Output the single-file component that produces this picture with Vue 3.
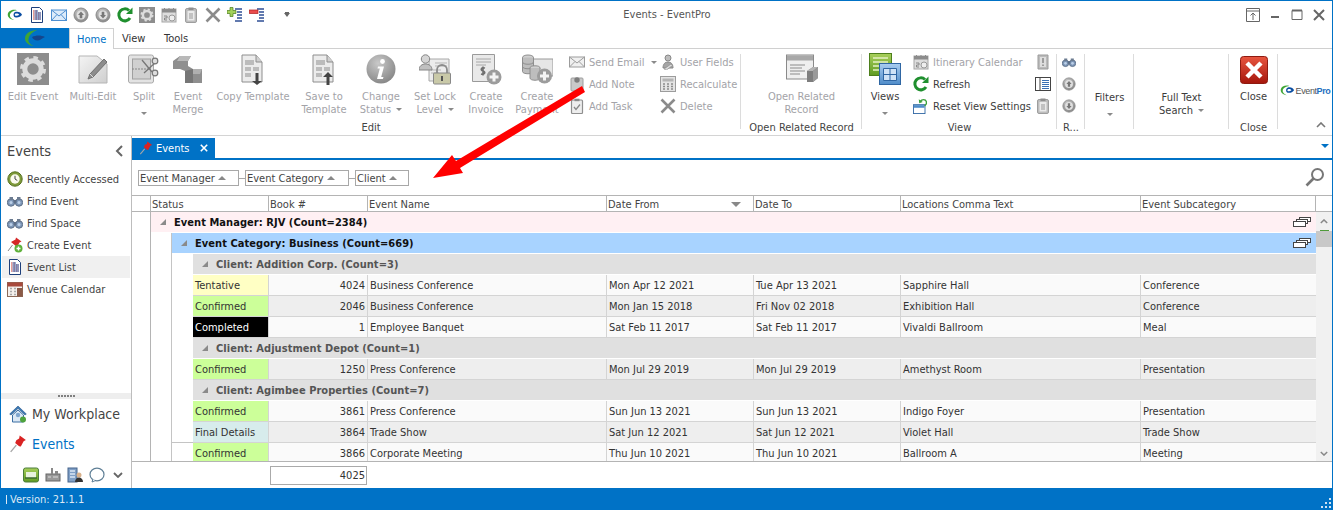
<script setup>
const qat = ['logo', 'doc', 'mail', 'up', 'down', 'refresh', 'gearsq', 'cal', 'clip', 'xgray', 'addcol', 'delcol']

const editBig = [
  { w: 64, icon: 'gear', lines: ['Edit Event'] },
  { w: 56, icon: 'multi', lines: ['Multi-Edit'] },
  { w: 46, icon: 'split', lines: ['Split'], below: true },
  { w: 42, icon: 'merge', lines: ['Event', 'Merge'] },
  { w: 88, icon: 'tdown', lines: ['Copy Template'] },
  { w: 54, icon: 'tup', lines: ['Save to', 'Template'] },
  { w: 60, icon: 'info', lines: ['Change', 'Status'], inline: true },
  { w: 48, icon: 'lock', lines: ['Set Lock', 'Level'], inline: true },
  { w: 54, icon: 'invoice', lines: ['Create', 'Invoice'] },
  { w: 48, icon: 'pay', lines: ['Create', 'Payment'] }
]
const smallA = [
  { icon: 'mail-g', t: 'Send Email', arrow: true },
  { icon: 'note', t: 'Add Note' },
  { icon: 'task', t: 'Add Task' }
]
const smallB = [
  { icon: 'user', t: 'User Fields' },
  { icon: 'calc', t: 'Recalculate' },
  { icon: 'xgray', t: 'Delete' }
]
const viewSmall = [
  { icon: 'cal', t: 'Itinerary Calendar', off: true },
  { icon: 'refresh', t: 'Refresh' },
  { icon: 'reset', t: 'Reset View Settings' }
]
const nav = [
  { icon: 'clock', t: 'Recently Accessed' },
  { icon: 'bino', t: 'Find Event' },
  { icon: 'bino', t: 'Find Space' },
  { icon: 'pinadd', t: 'Create Event' },
  { icon: 'doc', t: 'Event List', on: true },
  { icon: 'venue', t: 'Venue Calendar' }
]
const groupChips = [
  { t: 'Event Manager', w: 101 },
  { t: 'Event Category', w: 104 },
  { t: 'Client', w: 54 }
]
const cols = [
  { t: 'Book #', c: 'book' },
  { t: 'Event Name', c: 'name' },
  { t: 'Date From', c: 'from', sort: true },
  { t: 'Date To', c: 'to' },
  { t: 'Locations Comma Text', c: 'loc' },
  { t: 'Event Subcategory', c: 'sub' }
]
const d = (status, cls, num, name, from, to, loc, sub, alt, sep) => ({ type: 'd', status, cls, num, name, from, to, loc, sub, alt, sep })
const rows = [
  { type: 'm', t: 'Event Manager: RJV (Count=2384)' },
  { type: 'c', t: 'Event Category: Business (Count=669)' },
  { type: 'l', t: 'Client: Addition Corp. (Count=3)' },
  d('Tentative', 'st-t', 4024, 'Business Conference', 'Mon Apr 12 2021', 'Tue Apr 13 2021', 'Sapphire Hall', 'Conference', false),
  d('Confirmed', 'st-c', 2046, 'Business Conference', 'Mon Jan 15 2018', 'Fri Nov 02 2018', 'Exhibition Hall', 'Conference', true),
  d('Completed', 'st-k', 1, 'Employee Banquet', 'Sat Feb 11 2017', 'Sat Feb 11 2017', 'Vivaldi Ballroom', 'Meal', false),
  { type: 'l', t: 'Client: Adjustment Depot (Count=1)' },
  d('Confirmed', 'st-c', 1250, 'Press Conference', 'Mon Jul 29 2019', 'Mon Jul 29 2019', 'Amethyst Room', 'Presentation', true),
  { type: 'l', t: 'Client: Agimbee Properties (Count=7)' },
  d('Confirmed', 'st-c', 3861, 'Press Conference', 'Sun Jun 13 2021', 'Sun Jun 13 2021', 'Indigo Foyer', 'Presentation', false),
  d('Final Details', 'st-f', 3864, 'Trade Show', 'Sat Jun 12 2021', 'Sat Jun 12 2021', 'Violet Hall', 'Trade Show', true, true),
  d('Confirmed', 'st-c', 3866, 'Corporate Meeting', 'Thu Jun 10 2021', 'Thu Jun 10 2021', 'Ballroom A', 'Meeting', false)
]
</script>

<template>
  <div class="app">
    <svg class="defs" aria-hidden="true">
      <defs>
        <linearGradient id="gy" x1="0" y1="0" x2="0" y2="1"><stop offset="0" stop-color="#c4c4c4"/><stop offset="1" stop-color="#8a8a8a"/></linearGradient>
        <linearGradient id="pg" x1="0" y1="0" x2="1" y2="1"><stop offset="0" stop-color="#f4f4f4"/><stop offset="1" stop-color="#cfcfcf"/></linearGradient>
        <linearGradient id="rd" x1="0" y1="0" x2="0" y2="1"><stop offset="0" stop-color="#e8553f"/><stop offset="1" stop-color="#a5160c"/></linearGradient>
        <linearGradient id="gn" x1="0" y1="0" x2="0" y2="1"><stop offset="0" stop-color="#a8cf5a"/><stop offset="1" stop-color="#5f9a22"/></linearGradient>
        <linearGradient id="bl" x1="0" y1="0" x2="0" y2="1"><stop offset="0" stop-color="#a9cdf0"/><stop offset="1" stop-color="#4f8cc9"/></linearGradient>
        <radialGradient id="ig" cx=".4" cy=".3" r=".8"><stop offset="0" stop-color="#c9c9c9"/><stop offset="1" stop-color="#808080"/></radialGradient>
      </defs>

      <symbol id="logo" viewBox="0 0 16 16">
        <path d="M10 3.2C6 1.8 1.4 3.6.8 7c-.5 3 2.4 5.6 6.4 6-3-1-4.700-3-4.300-5.200C3.300 5.400 6.300 3.600 10 3.200z" fill="#3fa535"/>
        <path d="M8 5c3-1 6 .3 7 2.800-1.500 2.300-4.500 3.200-7 2.500C6 9.600 6 6 8 5z" fill="#0b4ea2"/>
        <path d="M8.500 6.600c1.400-.5 3 0 3.700 1.200-1 1-2.600 1.300-3.700.9-.9-.4-.9-1.700 0-2.100z" fill="#fff"/>
      </symbol>
      <symbol id="filelogo" viewBox="0 0 20 16">
        <path d="M12 0C5 0 0 4 0 8.500c0 4 4 7 9 7.500-4-1.500-6-4-5.500-7C4 5 8 1.500 12 0z" fill="#3fa535"/>
        <path d="M7 7c4-2 9-2 13 0-3 1-4 3-7 3.500-2.500.4-5-1-6-3.500z" fill="#14468c"/>
      </symbol>
      <symbol id="doc" viewBox="0 0 16 16">
        <path d="M2.500.5h8l3 3v12h-11z" fill="#fff" stroke="#1d3f7a"/>
        <path d="M4 4h5M4 6h8M4 8h8M4 10h8M4 12h8" stroke="#d03a2f" stroke-dasharray="1.500 1"/>
        <path d="M5.500 6h6.500M5.500 8h6.500M5.500 10h6.500M5.500 12h6.500M5.500 4h3.500" stroke="#2a5ba8"/>
      </symbol>
      <symbol id="mail" viewBox="0 0 16 16">
        <rect x=".5" y="3" width="15" height="10.500" fill="#dcebfa" stroke="#4f8fd0"/>
        <path d="M.5 3 8 9l7.500-6M.5 13.500 6 7.500M15.500 13.500 10 7.500" fill="none" stroke="#4f8fd0"/>
      </symbol>
      <symbol id="mail-g" viewBox="0 0 16 16">
        <rect x=".5" y="3" width="15" height="10" fill="#f0f0f0" stroke="#9c9c9c"/>
        <path d="M.5 3 8 9l7.500-6M.5 13 6 7.500M15.500 13 10 7.500" fill="none" stroke="#9c9c9c"/>
      </symbol>
      <symbol id="up" viewBox="0 0 16 16">
        <circle cx="8" cy="8" r="7" fill="url(#ig)" stroke="#8a8a8a"/>
        <circle cx="8" cy="8" r="4.500" fill="#e0e0e0"/>
        <path d="M8 4.500 11 8H9.300v3.200H6.700V8H5z" fill="#777"/>
      </symbol>
      <symbol id="down" viewBox="0 0 16 16">
        <circle cx="8" cy="8" r="7" fill="url(#ig)" stroke="#8a8a8a"/>
        <circle cx="8" cy="8" r="4.500" fill="#e0e0e0"/>
        <path d="M8 11.500 11 8H9.300V4.800H6.700V8H5z" fill="#777"/>
      </symbol>
      <symbol id="refresh" viewBox="0 0 16 16">
        <path d="M13 11a6 6 0 1 1 -1-7.500" fill="none" stroke="#1f8f2e" stroke-width="3"/>
        <path d="M15.500 .5v6.500H9z" fill="#1f8f2e"/>
      </symbol>
      <symbol id="gearsq" viewBox="0 0 32 32">
        <rect width="32" height="32" fill="#8d8d8d"/>
        <circle cx="16" cy="16" r="11.200" fill="none" stroke="#dcdcdc" stroke-width="3.600" stroke-dasharray="4.400 4.400"/>
        <circle cx="16" cy="16" r="8.200" fill="none" stroke="#dcdcdc" stroke-width="5"/>
      </symbol>
      <symbol id="gear" viewBox="0 0 32 32"><use href="#gearsq"/></symbol>
      <symbol id="cal" viewBox="0 0 16 16">
        <rect x="1" y="2" width="14" height="13" fill="#ddd" stroke="#a5a5a5"/>
        <rect x="1" y="2" width="14" height="3.500" fill="#8c8c8c"/>
        <path d="M3.500 1v3M8 1v3M12.500 1v3" stroke="#8c8c8c"/>
        <circle cx="11" cy="11" r="3" fill="#eee" stroke="#999"/>
        <path d="M3 9h3v2H3.500v2H6" fill="none" stroke="#888"/>
      </symbol>
      <symbol id="clip" viewBox="0 0 16 16">
        <rect x="2.500" y="1.500" width="11" height="14" rx="1.500" fill="#bdbdbd" stroke="#9e9e9e"/>
        <rect x="4.500" y="4" width="7" height="9.500" fill="#eaeaea"/>
        <rect x="5.500" y=".5" width="5" height="2.500" fill="#8f8f8f"/>
        <path d="M6 7h4M6 9h4M6 11h4" stroke="#999"/>
      </symbol>
      <symbol id="xgray" viewBox="0 0 16 16">
        <path d="M1.500 1.500l13 13M14.500 1.500l-13 13" stroke="#8b8b8b" stroke-width="2.600"/>
      </symbol>
      <symbol id="addcol" viewBox="0 0 16 16">
        <path d="M8 2h7M10 5h5M10 8h5M10 11h5M8 14h7" stroke="#2f4f95" stroke-width="1.400"/>
        <path d="M3 .5h3v3h3v3H6v3H3v-3H0v-3h3z" fill="#a4d25a" stroke="#4a7d1e" stroke-width=".7"/>
      </symbol>
      <symbol id="delcol" viewBox="0 0 16 16">
        <path d="M8 2h7M10 5h5M10 8h5M10 11h5M8 14h7" stroke="#2f4f95" stroke-width="1.400"/>
        <rect x=".5" y="3" width="8.500" height="3.500" fill="#ea4c4c" stroke="#b01f1f" stroke-width=".7"/>
      </symbol>

      <symbol id="multi" viewBox="0 0 32 32">
        <path d="M2 3h18l10 8v19H2z" fill="url(#pg)" stroke="#b5b5b5"/>
        <path d="M27 6l3 3-14 15-5 2 2-5z" fill="#8d8d8d" stroke="#6f6f6f"/>
        <path d="M13 21l3 3" stroke="#ddd"/>
      </symbol>
      <symbol id="split" viewBox="0 0 32 32">
        <rect x=".5" y="2" width="25" height="28" rx="2" fill="#e3e3e3" stroke="#a9a9a9"/>
        <rect x="4.500" y="6" width="18" height="20" fill="#d0d0d0" stroke="#a0a0a0"/>
        <path d="M4 16h18" stroke="#888" stroke-dasharray="2 1"/>
        <path d="M14 7l10 12M28 9 16 20" stroke="#777" stroke-width="1.300"/>
        <circle cx="27" cy="8" r="2.800" fill="#ddd" stroke="#777" stroke-width="1.200"/>
        <circle cx="27" cy="20" r="2.800" fill="#ddd" stroke="#777" stroke-width="1.200"/>
      </symbol>
      <symbol id="merge" viewBox="0 0 32 32">
        <path d="M8 3h11l-3 5v5l5 3h9v14H13V18l-5-2H1V8z" fill="#8f8f8f"/>
        <path d="M8 3h11l-3 5H5z" fill="#b9b9b9"/>
        <path d="M21 16h9l-2 5h-7z" fill="#b0b0b0"/>
        <path d="M13 18l8-2v14h-8z" fill="#767676"/>
      </symbol>
      <symbol id="tdown" viewBox="0 0 32 32">
        <path d="M5 2h14l6 7v20H5z" fill="#ececec" stroke="#8e8e8e"/>
        <path d="M8 7h9v5H8zM8 14h6v4H8zM16 14h6v4h-6zM8 20h6v4H8z" fill="#bcbcbc"/>
        <path d="M19 2v7h6" fill="#d0d0d0" stroke="#8e8e8e"/>
        <path d="M18.500 20h3v8H25l-5 4-5-4h3.500z" fill="#444"/>
      </symbol>
      <symbol id="tup" viewBox="0 0 32 32">
        <path d="M5 2h14l6 7v20H5z" fill="#ececec" stroke="#8e8e8e"/>
        <path d="M8 7h9v5H8zM8 14h6v4H8zM16 14h6v4h-6zM8 20h6v4H8z" fill="#bcbcbc"/>
        <path d="M19 2v7h6" fill="#d0d0d0" stroke="#8e8e8e"/>
        <path d="M18.500 32h3v-8H25l-5-5-5 5h3.500z" fill="#444"/>
      </symbol>
      <symbol id="info" viewBox="0 0 32 32">
        <circle cx="16" cy="16" r="14.500" fill="url(#ig)"/>
        <circle cx="17.500" cy="8.500" r="2.400" fill="#fff"/>
        <path d="M13 13.500h6l-2.800 10.500h2.300l-.6 2H12l2.800-10.500h-2.300z" fill="#fff"/>
      </symbol>
      <symbol id="lock" viewBox="0 0 32 32">
        <path d="M10 6h20v22H10z" fill="#ececec" stroke="#a8a8a8"/>
        <path d="M16 10h12M16 13h12M12 17h10M12 20h8" stroke="#b5b5b5"/>
        <circle cx="6.500" cy="6" r="4.200" fill="#d5d5d5" stroke="#868686"/>
        <path d="M0 17c0-4 3-6 6.500-6s6.500 2 6.500 6z" fill="#c0c0c0" stroke="#868686"/>
        <path d="M18 21v-4a5 5 0 0 1 10 0v4" fill="none" stroke="#8b8b8b" stroke-width="1.800"/>
        <rect x="14.500" y="20" width="17" height="11" rx="1" fill="#c9c9a8" stroke="#888"/>
        <rect x="22" y="23" width="2" height="5" fill="#555"/>
      </symbol>
      <symbol id="invoice" viewBox="0 0 32 32">
        <path d="M2.500 1.500h22v27h-22z" fill="#e9e9e9" stroke="#9a9a9a"/>
        <path d="M6 6h15M6 9h15M6 12h10" stroke="#a8a8a8"/>
        <circle cx="24" cy="24" r="7.500" fill="#9c9c9c"/>
        <path d="M22.500 19.500h3v3h3v3h-3v3h-3v-3h-3v-3h3z" fill="#f4f4f4"/>
        <path d="M15 15c-4-1-5 2-2 3s2 4-2 3M13 13.500v9" fill="none" stroke="#6f6f6f" stroke-width="1.600"/>
      </symbol>
      <symbol id="pay" viewBox="0 0 32 32">
        <rect x="11" y="6" width="21" height="17" fill="#e6e6e6" stroke="#9a9a9a"/>
        <ellipse cx="7" cy="4.500" rx="5.500" ry="2.500" fill="#d0d0d0" stroke="#8e8e8e"/>
        <path d="M1.500 4.500v14c0 3 11 3 11 0v-14" fill="#bdbdbd" stroke="#8e8e8e"/>
        <path d="M1.500 9c0 3 11 3 11 0M1.500 13.500c0 3 11 3 11 0" fill="none" stroke="#8e8e8e"/>
        <ellipse cx="14" cy="15" rx="5" ry="2.200" fill="#d0d0d0" stroke="#8e8e8e"/>
        <path d="M9 15v10c0 3 10 3 10 0V15" fill="#bdbdbd" stroke="#8e8e8e"/>
        <circle cx="23.500" cy="23" r="7.500" fill="#9c9c9c"/>
        <path d="M22 18.500h3v3h3v3h-3v3h-3v-3h-3v-3h3z" fill="#f4f4f4"/>
      </symbol>
      <symbol id="note" viewBox="0 0 16 16">
        <rect x="2" y="2" width="12" height="13" rx="1" fill="#c9c9c9" stroke="#9e9e9e"/>
        <circle cx="8" cy="4" r="2.700" fill="#7d7d7d"/>
      </symbol>
      <symbol id="task" viewBox="0 0 16 16">
        <rect x="2.500" y="2" width="11" height="13.500" rx="1" fill="#eee" stroke="#8f8f8f" stroke-width="1.200"/>
        <rect x="5.500" y=".7" width="5" height="2.500" fill="#8a8a8a"/>
        <path d="M5 9l2 2.500 4-5" fill="none" stroke="#888" stroke-width="1.300"/>
      </symbol>
      <symbol id="user" viewBox="0 0 16 16">
        <circle cx="8" cy="4" r="3" fill="#bdbdbd" stroke="#888"/>
        <path d="M3 14c0-4 2-6 5-6s5 2 5 6z" fill="#a5a5a5" stroke="#888"/>
        <path d="M4 15l7-5 1.500 1.500-6 4.500z" fill="#dadada" stroke="#888" stroke-width=".6"/>
      </symbol>
      <symbol id="calc" viewBox="0 0 16 16">
        <rect x=".5" y=".5" width="15" height="15" fill="#e4e4e4" stroke="#9c9c9c"/>
        <rect x="2.500" y="2.500" width="11" height="3" fill="#b4b4b4"/>
        <path d="M3 8h2M7 8h2M11 8h2M3 10.500h2M7 10.500h2M11 10.500h2M3 13h2M7 13h2M11 13h2" stroke="#8b8b8b" stroke-width="1.400"/>
      </symbol>
      <symbol id="openrel" viewBox="0 0 32 32">
        <rect x=".5" y="2" width="27" height="24" fill="#efefef" stroke="#8a8a8a"/>
        <rect x="1" y="2.500" width="26" height="5" fill="#a8a8a8"/>
        <path d="M4 12h15M4 15h12M4 18h15M4 21h10" stroke="#8b8b8b"/>
        <path d="M21 18l6-4h5v11l-5 4h-6z" fill="#7e7e7e"/>
        <path d="M21 18l6-4h5l-5 4z" fill="#b5b5b5"/>
        <path d="M27 18v11l5-4V14z" fill="#9a9a9a"/>
      </symbol>
      <symbol id="views" viewBox="0 0 32 32">
        <rect x=".5" y=".5" width="22" height="22" fill="url(#gn)" stroke="#4d7f1c"/>
        <path d="M4 5h15M4 9h15M4 13h15M4 17h8" stroke="#e6f1c4" stroke-width="1.500"/>
        <rect x="10.500" y="10.500" width="21" height="21" fill="url(#bl)" stroke="#2f66a3"/>
        <path d="M14.500 15.500h13v12h-13zM14.500 21.500h13M21 15.500v12" fill="#cfe3f7" stroke="#2f66a3"/>
      </symbol>
      <symbol id="reset" viewBox="0 0 18 18">
        <rect x=".5" y="7.500" width="13" height="10" fill="#fff" stroke="#2f66a3"/>
        <rect x="1" y="8" width="12" height="3" fill="#4f8cc9"/>
        <path d="M8 4c2-3 6-3 7 0s-1 4-2 5" fill="none" stroke="#3aa03a" stroke-width="1.500"/>
        <path d="M6.500 1.500l.5 4.500 4-1.500z" fill="#3aa03a"/>
      </symbol>
      <symbol id="exclam" viewBox="0 0 16 16">
        <path d="M3 1h10v14H3z" fill="#bbb" stroke="#9b9b9b"/>
        <rect x="5" y="3" width="6" height="10" fill="#dedede"/>
        <path d="M8 4v5M8 10.500v1.500" stroke="#888" stroke-width="1.500"/>
      </symbol>
      <symbol id="panel" viewBox="0 0 16 16">
        <rect x=".5" y="1.500" width="15" height="13" fill="#fff" stroke="#444"/>
        <path d="M5 1.500v13" stroke="#444"/>
        <path d="M7 4.500h7M7 6.500h7M7 8.500h7M7 10.500h7M7 12.500h7" stroke="#3a6fb3"/>
      </symbol>
      <symbol id="bino" viewBox="0 0 16 16">
        <circle cx="4" cy="9.500" r="3.700" fill="#7e97b8" stroke="#5d6f87"/>
        <circle cx="12" cy="9.500" r="3.700" fill="#7e97b8" stroke="#5d6f87"/>
        <rect x="2.500" y="4" width="3.500" height="3" fill="#6b7b90"/>
        <rect x="10" y="4" width="3.500" height="3" fill="#6b7b90"/>
        <rect x="6.500" y="7" width="3" height="3" fill="#5d6f87"/>
        <circle cx="4" cy="9.500" r="1.500" fill="#bcd0e8"/>
        <circle cx="12" cy="9.500" r="1.500" fill="#bcd0e8"/>
      </symbol>
      <symbol id="closebig" viewBox="0 0 28 28">
        <rect x=".5" y=".5" width="27" height="27" rx="3" fill="url(#rd)" stroke="#8e1a10"/>
        <path d="M7 7l14 14M21 7 7 21" stroke="#fff" stroke-width="4.500"/>
      </symbol>
      <symbol id="clock" viewBox="0 0 16 16">
        <circle cx="8" cy="8" r="7.200" fill="#7f9a3a" stroke="#55701f"/>
        <circle cx="8" cy="8" r="4.700" fill="#fbfbef"/>
        <path d="M8 4.800V8l2.300 1.500" fill="none" stroke="#444"/>
      </symbol>
      <symbol id="pinadd" viewBox="0 0 16 16">
        <path d="M9 .5l5.500 4-2 1-2.500 4.500-6-5 4.500-2.500z" fill="#d62828"/>
        <path d="M5.500 8 1 14" stroke="#888"/>
        <circle cx="11.500" cy="11.500" r="4" fill="#5fb13a"/>
        <path d="M9.500 11.500h4M11.500 9.500v4" stroke="#fff" stroke-width="1.400"/>
      </symbol>
      <symbol id="pin" viewBox="0 0 16 16">
        <path d="M9.500.5l5.500 4-2 1-2.500 4.800-1.500-.3L5.500 7l1-2.300L9 3z" fill="#d92323"/>
        <path d="M6.500 9 1.500 15" stroke="#a6a6a6" stroke-width="1.200"/>
      </symbol>
      <symbol id="venue" viewBox="0 0 16 16">
        <rect x=".5" y="1.500" width="15" height="14" fill="#f5f0ec" stroke="#8c6a58"/>
        <rect x=".5" y="1.500" width="15" height="4" fill="#a84a3d"/>
        <path d="M3 7.500h2M7 7.500h2M3 10.500h2M7 10.500h2M3 13.500h2M7 13.500h2" stroke="#aaa" stroke-width="1.500"/>
        <rect x="10" y="7" width="5.500" height="8.500" fill="#8b5a48"/>
      </symbol>
      <symbol id="home" viewBox="0 0 18 18">
        <path d="M9 1 .7 9l1.300 1 7-6.500L16 10l1.300-1z" fill="#3b78b5" stroke="#2a5988" stroke-width=".6"/>
        <path d="M3.500 10 9 5l5.500 5v7h-11z" fill="#dbe8f5" stroke="#3b6ea3"/>
        <circle cx="9" cy="10" r="2.200" fill="#7fa6cf"/>
        <circle cx="14" cy="14.500" r="3" fill="#4ea33d"/>
      </symbol>
      <symbol id="bar1" viewBox="0 0 16 16">
        <rect x=".5" y="1" width="15" height="14" rx="2" fill="url(#gn)" stroke="#4a7d3b"/>
        <rect x="3" y="5" width="10" height="6" fill="#e8f2dd"/>
        <path d="M2 11h12" stroke="#3b6a2c" stroke-width="1.500"/>
      </symbol>
      <symbol id="bar2" viewBox="0 0 16 16">
        <rect x="1" y="7" width="14" height="7" fill="#999" stroke="#666"/>
        <rect x="6" y="1" width="2" height="6" fill="#888"/>
        <rect x="10" y="4" width="3" height="3" fill="#888"/>
        <path d="M3 10h3M8 10h5" stroke="#ddd"/>
      </symbol>
      <symbol id="bar3" viewBox="0 0 16 16">
        <rect x="1" y="1" width="9" height="14" fill="#7f9fc6" stroke="#46648c"/>
        <path d="M3 4h5M3 7h5M3 10h5" stroke="#dce8f5" stroke-width="1.300"/>
        <circle cx="12" cy="8" r="2.500" fill="#d7b08b"/>
        <path d="M8 15c0-3 2-4.500 4-4.500s4 1.500 4 4.500z" fill="#333"/>
      </symbol>
      <symbol id="bar4" viewBox="0 0 16 16">
        <ellipse cx="8" cy="7.500" rx="7" ry="6.300" fill="#fff" stroke="#5f7f96" stroke-width="1.200"/>
        <path d="M4 12l-1 3 4-1.700" fill="#fff" stroke="#5f7f96"/>
      </symbol>
      <symbol id="stack" viewBox="0 0 18 10">
        <rect x="6.500" y=".5" width="11" height="4" fill="#fff" stroke="#444"/>
        <rect x="3.500" y="2.500" width="11" height="4" fill="#fff" stroke="#444"/>
        <rect x=".5" y="4.500" width="12" height="5" fill="#fff" stroke="#444"/>
      </symbol>
    </svg>

    <header class="qat-row">
      <div class="qat">
        <span v-for="(q, i) in qat" :key="i" class="qat-item">
          <svg class="i16"><use :href="'#' + q"/></svg>
        </span>
        <span class="qat-drop"></span>
      </div>
      <div class="title">Events - EventPro</div>
      <div class="winctl">
        <svg class="wc" viewBox="0 0 14 14"><path d="M.5 .5h13v13H.5zM.5 3h13M7 12V5M4.500 7.500 7 5l2.500 2.500" fill="none" stroke="#666"/></svg>
        <svg class="wc" viewBox="0 0 14 14"><path d="M3 9h8" stroke="#666" stroke-width="2"/></svg>
        <svg class="wc" viewBox="0 0 14 14"><path d="M2 2.500h10v9H2z" fill="none" stroke="#666"/><path d="M2 2.500h10" stroke="#666" stroke-width="2"/></svg>
        <svg class="wc" viewBox="0 0 14 14"><path d="M2 2l10 10M12 2 2 12" stroke="#666" stroke-width="2"/></svg>
      </div>
    </header>

    <nav class="tabs">
      <div class="file-tab">
        <svg class="file-logo"><use href="#filelogo"/></svg>
      </div>
      <div class="tab active">Home</div>
      <div class="tab view">View</div>
      <div class="tab tools">Tools</div>
    </nav>

    <section class="ribbon">
      <div class="group g-edit">
        <div class="g-body">
          <div v-for="b in editBig" :key="b.icon" class="big" :style="{ width: b.w + 'px' }">
            <svg class="i32"><use :href="'#' + b.icon"/></svg>
            <div v-for="(l, li) in b.lines" :key="li" class="big-t off">{{ l }}<span v-if="b.inline && li === 1" class="caret in"></span></div>
            <span v-if="b.below" class="caret below"></span>
          </div>
          <div class="col col-a">
            <div v-for="s in smallA" :key="s.t" class="small off"><svg class="i16"><use :href="'#' + s.icon"/></svg>{{ s.t }}<span v-if="s.arrow" class="caret in2"></span></div>
          </div>
          <div class="col col-b">
            <div v-for="s in smallB" :key="s.t" class="small off"><svg class="i16"><use :href="'#' + s.icon"/></svg>{{ s.t }}</div>
          </div>
        </div>
        <div class="g-label">Edit</div>
      </div>

      <div class="group g-open">
        <div class="g-body">
          <div class="big w-full">
            <svg class="i32"><use href="#openrel"/></svg>
            <div class="big-t off">Open Related</div>
            <div class="big-t off">Record</div>
          </div>
        </div>
        <div class="g-label">Open Related Record</div>
      </div>

      <div class="group g-view">
        <div class="g-body">
          <div class="big w-views">
            <svg class="i32"><use href="#views"/></svg>
            <div class="big-t">Views</div>
            <span class="caret below"></span>
          </div>
          <div class="col col-v">
            <div v-for="s in viewSmall" :key="s.t" class="small" :class="{ off: s.off }"><svg class="i16"><use :href="'#' + s.icon"/></svg>{{ s.t }}</div>
          </div>
          <div class="col col-ic">
            <div class="small"><svg class="i16"><use href="#exclam"/></svg></div>
            <div class="small"><svg class="i16"><use href="#panel"/></svg></div>
            <div class="small"><svg class="i16"><use href="#clip"/></svg></div>
          </div>
        </div>
        <div class="g-label">View</div>
      </div>

      <div class="group g-r">
        <div class="g-body">
          <div class="col col-r">
            <div class="small"><svg class="i14"><use href="#bino"/></svg></div>
            <div class="small"><svg class="i14"><use href="#up"/></svg></div>
            <div class="small"><svg class="i14"><use href="#down"/></svg></div>
          </div>
        </div>
        <div class="g-label">R...</div>
      </div>

      <div class="group g-filters">
        <div class="mid">
          <div class="big-t">Filters</div>
          <span class="caret"></span>
        </div>
      </div>

      <div class="group g-full">
        <div class="mid">
          <div class="big-t">Full Text</div>
          <div class="big-t">Search<span class="caret in"></span></div>
        </div>
      </div>

      <div class="group g-close">
        <div class="g-body">
          <div class="big w-full">
            <svg class="i28"><use href="#closebig"/></svg>
            <div class="big-t">Close</div>
          </div>
        </div>
        <div class="g-label">Close</div>
      </div>

      <div class="g-logo">
        <div class="ep">
          <svg class="ep-mark" viewBox="0 0 16 16"><use href="#logo"/></svg>
          <span class="ep-t">Event<b>Pro</b></span>
        </div>
        <svg class="collapse" viewBox="0 0 10 6"><path d="M1 5l4-4 4 4" fill="none" stroke="#777" stroke-width="1.600"/></svg>
      </div>
    </section>

    <div class="body">
      <aside class="side">
        <div class="side-head">
          <span>Events</span>
          <svg class="side-chev" viewBox="0 0 8 12"><path d="M7 1 2 6l5 5" fill="none" stroke="#666" stroke-width="2"/></svg>
        </div>
        <div v-for="n in nav" :key="n.t" class="nav" :class="{ on: n.on }">
          <svg class="i16"><use :href="'#' + n.icon"/></svg>{{ n.t }}
        </div>
        <div class="spacer"></div>
        <div class="split-bar"><i></i><i></i><i></i><i></i><i></i><i></i></div>
        <div class="pane"><svg class="i18"><use href="#home"/></svg>My Workplace</div>
        <div class="pane cur"><svg class="i18"><use href="#pin"/></svg>Events</div>
        <div class="side-foot">
          <svg class="i16"><use href="#bar1"/></svg>
          <svg class="i16"><use href="#bar2"/></svg>
          <svg class="i16"><use href="#bar3"/></svg>
          <svg class="i16"><use href="#bar4"/></svg>
          <svg class="foot-chev" viewBox="0 0 10 6"><path d="M1 1l4 4 4-4" fill="none" stroke="#666" stroke-width="1.800"/></svg>
        </div>
      </aside>

      <main class="main">
        <div class="doc-tabs">
          <div class="doc-tab">
            <svg class="i14"><use href="#pin"/></svg>
            <span>Events</span>
            <svg class="doc-x" viewBox="0 0 8 8"><path d="M.8 .8l6.400 6.400M7.200 .8 .8 7.200" stroke="#fff" stroke-width="1.600"/></svg>
          </div>
          <span class="doc-menu"></span>
        </div>

        <div class="group-panel">
          <template v-for="(g, i) in groupChips" :key="g.t">
            <span v-if="i" class="link"></span>
            <div class="chip" :style="{ width: g.w + 'px' }">{{ g.t }}<span class="tri-up"></span></div>
          </template>
          <svg class="search" viewBox="0 0 20 20"><circle cx="12.500" cy="7.500" r="5.500" fill="none" stroke="#777" stroke-width="2"/><path d="M8.500 11.500 1.500 18.500" stroke="#777" stroke-width="2.600"/></svg>
        </div>

        <div class="head">
          <div class="h-ind"></div>
          <div class="h-cell status-h">Status</div>
          <div v-for="c in cols" :key="c.c" class="h-cell" :class="c.c">
            {{ c.t }}<span v-if="c.sort" class="tri-down"></span>
          </div>
        </div>

        <div class="grid-wrap">
          <div class="rows">
            <template v-for="(r, i) in rows" :key="i">
              <div v-if="r.type !== 'd'" class="row g-row" :class="'t-' + r.type">
                <span class="ind i1"></span>
                <span v-if="r.type !== 'm'" class="ind i2"></span>
                <span v-if="r.type === 'l'" class="ind i3"></span>
                <div class="g-fill">
                  <span class="exp"></span>
                  <span class="g-text">{{ r.t }}</span>
                  <svg v-if="r.type !== 'l'" class="stack"><use href="#stack"/></svg>
                </div>
              </div>
              <div v-else class="row d-row" :class="{ alt: r.alt }">
                <span class="ind i1"></span>
                <span class="ind i2"></span>
                <span class="ind i3" :class="{ sep: r.sep }"></span>
                <div class="cell status" :class="r.cls">{{ r.status }}</div>
                <div class="cell book">{{ r.num }}</div>
                <div class="cell name">{{ r.name }}</div>
                <div class="cell from">{{ r.from }}</div>
                <div class="cell to">{{ r.to }}</div>
                <div class="cell loc">{{ r.loc }}</div>
                <div class="cell sub">{{ r.sub }}</div>
              </div>
            </template>
          </div>
          <div class="scroll">
            <svg class="sc-chev" viewBox="0 0 10 6"><path d="M1 5l4-4 4 4" fill="none" stroke="#888" stroke-width="1.800"/></svg>
            <div class="sc-mark"></div>
            <div class="sc-thumb"></div>
            <div class="spacer"></div>
            <svg class="sc-chev dn" viewBox="0 0 10 6"><path d="M1 1l4 4 4-4" fill="none" stroke="#888" stroke-width="1.800"/></svg>
          </div>
        </div>

        <div class="footer">
          <div class="sum">4025</div>
        </div>
      </main>
    </div>

    <footer class="status-bar">
      <span class="pipe"></span>
      <span>Version: 21.1.1</span>
      <svg class="grip" viewBox="0 0 12 12"><path d="M9 1h2v2H9zM5 5h2v2H5zM9 5h2v2H9zM1 9h2v2H1zM5 9h2v2H5zM9 9h2v2H9z" fill="#cfe3f4"/></svg>
    </footer>

    <svg class="red-arrow" viewBox="0 0 1333 510"><polygon points="433,178 452,155 456,161 582,86 585,92 460,168 463,173" fill="#ff0000"/></svg>
  </div>
</template>

<style>
html, body { margin: 0; padding: 0; background: #fff; }
</style>

<style scoped>
.app {
  position: relative;
  width: 1333px;
  height: 510px;
  box-sizing: border-box;
  border: 1px solid #0072c6;
  border-bottom: 0;
  display: flex;
  flex-direction: column;
  overflow: hidden;
  background: #fff;
  font-family: "DejaVu Sans Condensed", "DejaVu Sans", sans-serif;
  font-size: 11px;
  color: #3c3c3c;
}
.defs { position: absolute; width: 0; height: 0; overflow: hidden; }
.i14 { width: 14px; height: 14px; flex: none; }
.i16 { width: 16px; height: 16px; flex: none; }
.i18 { width: 18px; height: 18px; flex: none; }
.i28 { width: 28px; height: 28px; flex: none; }
.i32 { width: 32px; height: 32px; flex: none; }
.spacer { flex: 1; }

/* title row */
.qat-row { height: 27px; display: flex; align-items: center; position: relative; flex: none; }
.qat { display: flex; align-items: center; padding-left: 3px; }
.qat-item { width: 22px; display: flex; justify-content: center; }
.qat-drop {
  margin-left: 16px; width: 0; height: 0;
  border: 3px solid transparent; border-top: 4px solid #666; border-bottom: 0;
  box-shadow: 0 -2px 0 -1px #666;
}
.title { position: absolute; left: 1px; right: 0; top: 6px; text-align: center; line-height: 16px; color: #555; }
.winctl { margin-left: auto; display: flex; gap: 8px; padding-right: 6px; }
.wc { width: 14px; height: 14px; }

/* tabs */
.tabs { height: 20px; display: flex; flex: none; border-bottom: 1px solid #d0d0d0; position: relative; box-sizing: content-box; }
.file-tab { width: 68px; height: 20px; background: #0072c6; display: flex; justify-content: center; align-items: center; }
.file-logo { width: 20px; height: 16px; }
.tab { line-height: 22px; color: #333; }
.tab.active { color: #0072c6; background: #fff; border: 1px solid #d0d0d0; border-bottom: 0; padding: 0 7px; line-height: 21px; width: 29px; text-align: center; position: relative; z-index: 1; height: 20px; box-sizing: content-box; }
.tab.view { padding: 0 8px 0 8px; width: 23px; }
.tab.tools { padding-left: 11px; }

/* ribbon */
.ribbon { height: 87px; flex: none; display: flex; border-bottom: 1px solid #d4d4d4; box-sizing: border-box; }
.group { display: flex; flex-direction: column; position: relative; }
.group::after { content: ""; position: absolute; right: 0; top: 5px; bottom: 6px; width: 1px; background: #dcdcdc; }
.g-edit { width: 740px; }
.g-open { width: 121px; }
.g-view { width: 195px; }
.g-r { width: 28px; }
.g-filters { width: 49px; }
.g-full { width: 95px; }
.g-close { width: 49px; }
.g-body { display: flex; height: 72px; flex: none; }
.g-label { text-align: center; line-height: 14px; color: #444; }
.big { display: flex; flex-direction: column; align-items: center; flex: none; padding-top: 4px; box-sizing: border-box; }
.big .i32 { margin-bottom: 5px; }
.big .i28 { margin: 3px 0 6px; }
.w-full { width: 100%; }
.w-views { width: 46px; }
.big-t { line-height: 13px; white-space: nowrap; text-align: center; color: #3c3c3c; }
.off { color: #a3a3a8 !important; }
.col { display: flex; flex-direction: column; padding-top: 2px; flex: none; box-sizing: border-box; }
.col-a { width: 91px; padding-left: 8px; }
.col-b { width: 89px; padding-left: 8px; }
.col-v { width: 123px; padding-left: 5px; }
.col-ic { width: 26px; padding-left: 4px; }
.col-r { width: 27px; padding-left: 5px; }
.small { height: 22px; display: flex; align-items: center; gap: 4px; white-space: nowrap; color: #3c3c3c; }
.caret { display: inline-block; width: 0; height: 0; border: 3px solid transparent; border-top: 3px solid #8a8a8a; border-bottom: 0; }
.caret.in { margin-left: 5px; vertical-align: 2px; }
.caret.in2 { margin-left: 2px; }
.caret.below { margin-top: 9px; }
.mid { flex: 1; display: flex; flex-direction: column; align-items: center; padding-top: 42px; box-sizing: border-box; }
.mid .caret:not(.in) { margin-top: 9px; }
.g-logo { flex: 1; position: relative; display: flex; flex-direction: column; align-items: center; }
.ep { display: flex; align-items: center; margin-top: 34px; gap: 1px; }
.ep-mark { width: 15px; height: 15px; }
.ep-t { font-size: 9px; letter-spacing: -.4px; color: #555; font-family: "Liberation Sans", sans-serif; }
.ep-t b { color: #1e6fc0; }
.collapse { position: absolute; right: 6px; bottom: 7px; width: 10px; height: 6px; }

/* body */
.body { flex: 1; display: flex; min-height: 0; }
.side { width: 130px; flex: none; border-right: 1px solid #bdbdbd; display: flex; flex-direction: column; }
.side-head { height: 32px; display: flex; align-items: center; justify-content: space-between; padding: 0 8px 2px 6px; font-size: 14.500px; color: #444; flex: none; box-sizing: border-box; }
.side-chev { width: 8px; height: 12px; }
.nav { height: 22px; margin: 0 1px; padding-left: 5px; display: flex; align-items: center; gap: 4px; color: #444; flex: none; }
.nav.on { background: #f0f0f0; }
.split-bar { height: 6px; background: #eeeeee; display: flex; justify-content: center; align-items: center; gap: 1px; flex: none; }
.split-bar i { width: 2px; height: 2px; background: #7f7f7f; }
.pane { height: 30px; display: flex; align-items: center; gap: 5px; padding-left: 8px; font-size: 14px; color: #444; flex: none; }
.pane.cur { color: #0072c6; }
.side-foot { height: 29px; padding: 3px 0 0 22px; display: flex; align-items: center; gap: 6px; box-sizing: border-box; flex: none; }
.foot-chev { width: 10px; height: 6px; margin-left: 2px; }

.main { flex: 1; display: flex; flex-direction: column; min-width: 0; }
.doc-tabs { height: 24px; flex: none; display: flex; align-items: flex-end; border-bottom: 2px solid #0072c6; box-sizing: border-box; position: relative; }
.doc-tab { width: 83px; height: 20px; box-sizing: border-box; background: #0072c6; color: #fff; display: flex; align-items: center; padding-left: 7px; gap: 3px; }
.doc-x { width: 8px; height: 8px; margin-left: 7px; }
.doc-menu { position: absolute; right: 3px; top: 8px; width: 0; height: 0; border: 4px solid transparent; border-top: 4px solid #0072c6; border-bottom: 0; }

.group-panel { height: 35px; flex: none; display: flex; align-items: center; padding: 1px 7px 0 6px; box-sizing: border-box; }
.chip { height: 16px; box-sizing: border-box; border: 1px solid #a8a8a8; padding: 1px 0 0 1px; display: flex; align-items: center; color: #444; }
.link { width: 6px; height: 1px; background: #a8a8a8; }
.tri-up { margin: -1px 0 0 3px; width: 0; height: 0; border: 4px solid transparent; border-bottom: 4px solid #888; border-top: 0; }
.tri-down { position: absolute; right: 12px; top: 6px; width: 0; height: 0; border: 5px solid transparent; border-top: 5px solid #888; border-bottom: 0; }
.search { width: 20px; height: 20px; margin: -3px 0 0 auto; }

.head { height: 17px; flex: none; display: flex; border-top: 1px solid #b4b4b4; border-bottom: 1px solid #b4b4b4; box-sizing: border-box; }
.h-ind { width: 19px; border-right: 1px solid #b4b4b4; box-sizing: border-box; flex: none; }
.h-cell { position: relative; box-sizing: border-box; border-right: 1px solid #b4b4b4; padding-left: 1px; line-height: 17px; height: 15px; color: #444; flex: none; white-space: nowrap; }
.status-h { width: 118px; }
.book { width: 99px; }
.name { width: 239px; }
.from { width: 147px; }
.to { width: 147px; }
.loc { width: 240px; }
.sub { width: 175px; }

.grid-wrap { flex: 1; display: flex; min-height: 0; overflow: hidden; }
.rows { flex: 1; min-width: 0; overflow: hidden; }
.row { height: 21px; display: flex; box-sizing: border-box; }
.ind { flex: none; box-sizing: border-box; background: #fff; height: 21px; }
.i1 { width: 19px; border-right: 1px solid #b4b4b4; }
.i2 { width: 21px; border-right: 1px solid #c4c4c4; }
.i3 { width: 21px; }
.i3.sep { border-bottom: 1px solid #c4c4c4; }
.g-fill { flex: 1; display: flex; align-items: center; height: 20px; font-weight: 700; position: relative; margin-bottom: 1px; }
.t-m .g-fill { background: #fff0f3; color: #111; }
.t-c .g-fill { background: #a8d3ff; color: #111; }
.t-l .g-fill { background: #e0e0e0; color: #555; }
.exp { width: 0; height: 0; margin: 0 8px 0 9px; border-style: solid; border-width: 0 0 6px 6px; border-color: transparent transparent #8a8a8a transparent; flex: none; }
.g-text { white-space: nowrap; letter-spacing: .05px; }
.stack { position: absolute; right: 5px; top: 5px; width: 18px; height: 10px; }
.cell { box-sizing: border-box; height: 21px; line-height: 21px; border-right: 1px solid #d4d4d4; border-bottom: 1px solid #d4d4d4; padding-left: 2px; flex: none; white-space: nowrap; color: #333; background: #fafafa; }
.d-row.alt .cell { background: #eeeeee; }
.cell.status { width: 76px; padding-left: 2px; }
.cell.book { text-align: right; padding-right: 2px; }
.cell.sub { border-right: 0; }
.d-row .cell.st-t { background: #ffffc4; }
.d-row .cell.st-c { background: #ccff99; }
.d-row .cell.st-k { background: #000; color: #fff; }
.d-row .cell.st-f { background: #d7ecec; }

.scroll { width: 16px; flex: none; display: flex; flex-direction: column; align-items: center; background: #f1f1f1; }
.sc-chev { width: 8px; height: 5px; margin-top: 7px; flex: none; }
.sc-chev.dn { margin: 0 0 5px; }
.sc-mark { width: 9px; height: 1px; background: #4f9a3a; margin-top: 6px; flex: none; }
.sc-thumb { width: 100%; height: 16px; background: #c8c8c8; flex: none; }

.footer { height: 27px; flex: none; border-top: 1px solid #b4b4b4; box-sizing: border-box; padding: 4px 0 0 138px; }
.sum { width: 97px; height: 19px; box-sizing: border-box; border: 1px solid #aaa; text-align: right; padding-right: 1px; line-height: 17px; color: #333; }

.status-bar { height: 22px; flex: none; margin: 0 -1px; background: #0072c6; color: #dce9f5; display: flex; align-items: center; padding-left: 6px; position: relative; gap: 3px; }
.pipe { width: 1px; height: 9px; background: #dce9f5; }
.grip { position: absolute; right: 1px; bottom: 1px; width: 12px; height: 12px; }
.red-arrow { position: absolute; left: -1px; top: -1px; width: 1333px; height: 510px; pointer-events: none; }
</style>
